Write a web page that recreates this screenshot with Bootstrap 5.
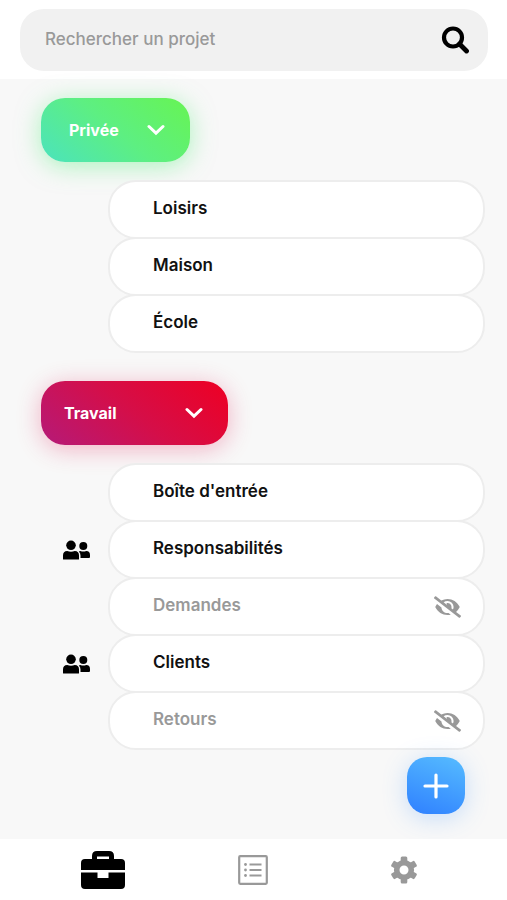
<!DOCTYPE html>
<html lang="fr">
<head>
<meta charset="utf-8">
<meta name="viewport" content="width=device-width, initial-scale=1">
<title>Projets</title>
<link href="https://cdn.jsdelivr.net/npm/bootstrap@5.3.0/dist/css/bootstrap.min.css" rel="stylesheet">
<style>
body { font-family: Inter, "Open Sans", sans-serif; font-size: 17px; line-height: 24px; background: #f8f8f8; color: #111; }
svg { display: block; flex: none; }
.top-bar { padding: 9px 19px 8px 20px; }
.search-box { background: #f1f1f1; border-radius: 24px; height: 62px; padding: 0 19px 0 25px; }
.search-box input { min-width: 0; font-weight: 500; color: #555; line-height: 24px; padding: 0 0 3px; }
.search-box input::placeholder { color: #999; opacity: 1; }
.projects { padding: 19px 22px 24px 41px; }
.group-btn { height: 64px; border-radius: 24px; color: #fff; font-weight: 700; font-size: 16px; }
.group-private { width: 149px; padding: 0 25px 0 28px; background: linear-gradient(40deg, #4be3bd, #5def82 50%, #67f453); box-shadow: 0 4px 24px rgba(93, 239, 130, .5); }
.group-work { width: 187px; padding: 0 25px 0 23px; background: linear-gradient(40deg, #b51a78, #d50e48 50%, #ee0023); box-shadow: 0 4px 24px rgba(225, 15, 75, .3); }
.project-list { margin: 18px 0 28px; }
.project-list li + li { margin-top: -2px; }
.share-col { width: 67px; padding-right: 18px; }
.project { height: 59px; border: 2px solid #ededed; border-radius: 28px; background: #fff; color: #111; font-weight: 600; padding: 0 22px 3px 43px; }
.project svg { margin-top: 3px; }
.project.is-hidden { color: #999; }
.add-btn { width: 58px; height: 57px; border-radius: 20px; background: linear-gradient(200deg, #56bcff, #2f80ff); box-shadow: 0 4px 24px rgba(70, 150, 255, .28); margin-right: 20px; }
.work-list { margin-bottom: 7px; }
.bottom-nav { height: 61px; padding: 0 28px; }
</style>
</head>
<body>
<svg width="0" height="0" class="d-none" aria-hidden="true">
  <symbol id="people" viewBox="0 0 27 20">
    <circle cx="8" cy="5.3" r="4.8"/>
    <path d="M0 19v-3.500Q0 11 4.200 11q3.800 1.600 7.600 0Q16 11 16 15.500V19q0 .5-.5.5H.5Q0 19.500 0 19z"/>
    <circle cx="20.300" cy="6" r="4"/>
    <path d="M15.800 11.500q.7-.6 1.600-.6 2.900 1.200 5.800 0Q27 11 27 15v2q0 1-1 1h-8.500v-2.500q0-2.500-1.700-4z"/>
  </symbol>
  <symbol id="eye-off" viewBox="0 0 640 512">
    <path d="M320 400c-75.850 0-137.250-58.710-142.900-133.110L72.200 185.820c-13.790 17.300-26.480 35.590-36.720 55.590a32.350 32.350 0 0 0 0 29.190C89.710 376.410 197.070 448 320 448c26.910 0 52.870-4 77.890-10.460L346 397.390a144.130 144.130 0 0 1-26 2.610zm313.820 58.100l-110.550-85.440a331.250 331.250 0 0 0 81.250-102.070 32.350 32.350 0 0 0 0-29.190C550.290 135.590 442.930 64 320 64a308.150 308.150 0 0 0-147.320 37.700L45.460 3.370A16 16 0 0 0 23 6.180L3.370 31.450A16 16 0 0 0 6.180 53.900l588.360 454.730a16 16 0 0 0 22.460-2.810l19.640-25.270a16 16 0 0 0-2.820-22.450zm-183.720-142l-39.300-30.380A94.750 94.750 0 0 0 416 256a94.760 94.760 0 0 0-121.310-92.210A47.650 47.650 0 0 1 304 192a46.640 46.640 0 0 1-1.540 10l-73.610-56.890A142.310 142.310 0 0 1 320 112a143.920 143.920 0 0 1 144 144c0 21.630-5.290 41.790-13.900 60.110z"/>
  </symbol>
  <symbol id="chevron" viewBox="0 0 18 12">
    <path d="M2 2.500l7 6.700 7-6.700" fill="none" stroke="currentColor" stroke-width="3" stroke-linecap="round"/>
  </symbol>
</svg>

<div class="d-flex flex-column min-vh-100">
  <header class="top-bar bg-white">
    <form class="search-box d-flex align-items-center" role="search">
      <input class="flex-grow-1 border-0 bg-transparent" type="search" placeholder="Rechercher un projet" aria-label="Rechercher un projet">
      <button class="btn border-0 p-0" type="button" aria-label="Rechercher">
        <svg width="28" height="28" viewBox="0 0 28 28" fill="none" stroke="#000"><circle cx="12" cy="11.500" r="9" stroke-width="4.200"/><path d="M18.500 18l7 7" stroke-width="4.800" stroke-linecap="round"/></svg>
      </button>
    </form>
  </header>

  <main class="projects flex-grow-1">
    <button class="group-btn group-private btn border-0 d-flex align-items-center justify-content-between" type="button" aria-expanded="true">Privée<svg width="18" height="12"><use href="#chevron"/></svg></button>
    <ul class="project-list list-unstyled">
      <li class="d-flex align-items-center"><span class="share-col"></span><a class="project flex-grow-1 d-flex align-items-center text-decoration-none" href="#">Loisirs</a></li>
      <li class="d-flex align-items-center"><span class="share-col"></span><a class="project flex-grow-1 d-flex align-items-center text-decoration-none" href="#">Maison</a></li>
      <li class="d-flex align-items-center"><span class="share-col"></span><a class="project flex-grow-1 d-flex align-items-center text-decoration-none" href="#">École</a></li>
    </ul>

    <button class="group-btn group-work btn border-0 d-flex align-items-center justify-content-between" type="button" aria-expanded="true">Travail<svg width="18" height="12"><use href="#chevron"/></svg></button>
    <ul class="project-list work-list list-unstyled">
      <li class="d-flex align-items-center"><span class="share-col"></span><a class="project flex-grow-1 d-flex align-items-center text-decoration-none" href="#">Boîte d'entrée</a></li>
      <li class="d-flex align-items-center"><span class="share-col d-flex justify-content-end"><svg width="27" height="20"><use href="#people"/></svg></span><a class="project flex-grow-1 d-flex align-items-center text-decoration-none" href="#">Responsabilités</a></li>
      <li class="d-flex align-items-center"><span class="share-col"></span><a class="project is-hidden flex-grow-1 d-flex align-items-center justify-content-between text-decoration-none" href="#">Demandes<svg width="27" height="22" fill="currentColor"><use href="#eye-off"/></svg></a></li>
      <li class="d-flex align-items-center"><span class="share-col d-flex justify-content-end"><svg width="27" height="20"><use href="#people"/></svg></span><a class="project flex-grow-1 d-flex align-items-center text-decoration-none" href="#">Clients</a></li>
      <li class="d-flex align-items-center"><span class="share-col"></span><a class="project is-hidden flex-grow-1 d-flex align-items-center justify-content-between text-decoration-none" href="#">Retours<svg width="27" height="22" fill="currentColor"><use href="#eye-off"/></svg></a></li>
    </ul>
    <div class="d-flex justify-content-end">
      <button class="add-btn btn border-0 p-0 d-flex align-items-center justify-content-center" type="button" aria-label="Ajouter un projet">
        <svg width="26" height="26" viewBox="0 0 26 26" stroke="#fff" stroke-width="3.200" stroke-linecap="round"><path d="M13 2v22M2 13h22"/></svg>
      </button>
    </div>
  </main>

  <nav class="bottom-nav bg-white d-flex align-items-center" aria-label="Navigation principale">
    <a class="flex-fill d-flex justify-content-center w-100" href="#" aria-label="Projets" aria-current="page">
      <svg width="44" height="38" viewBox="0 0 44 38"><path fill-rule="evenodd" d="M11 8V5q0-5 5-5h12q5 0 5 5v3h7q4 0 4 4v7H0v-7q0-4 4-4zM16 5.500V8h12V5.500z"/><path d="M0 21.500h16.500V27h11v-5.500H44V34q0 4-4 4H4q-4 0-4-4z"/></svg>
    </a>
    <a class="flex-fill d-flex justify-content-center w-100" href="#" aria-label="Listes">
      <svg width="30" height="30" viewBox="0 0 30 30" fill="#999" stroke="#999"><rect x="1.200" y="1.200" width="27.600" height="27.600" rx="1" fill="none" stroke-width="2.200"/><path d="M11.500 9.500h12M11.500 15h12M11.500 20.500h12" stroke-width="2"/><g stroke="none"><circle cx="7.500" cy="9.500" r="1.400"/><circle cx="7.500" cy="15" r="1.400"/><circle cx="7.500" cy="20.500" r="1.400"/></g></svg>
    </a>
    <a class="flex-fill d-flex justify-content-center w-100" href="#" aria-label="Paramètres">
      <svg width="26" height="28" viewBox="-13 -14 26 28" fill="#999" stroke="#999"><circle r="7.300" fill="none" stroke-width="5.600"/><g stroke="none"><rect id="tooth" x="-3.300" y="-13.500" width="6.600" height="6" rx="1.500"/><use href="#tooth" transform="rotate(60)"/><use href="#tooth" transform="rotate(120)"/><use href="#tooth" transform="rotate(180)"/><use href="#tooth" transform="rotate(240)"/><use href="#tooth" transform="rotate(300)"/></g></svg>
    </a>
  </nav>
</div>
<script src="https://cdn.jsdelivr.net/npm/bootstrap@5.3.0/dist/js/bootstrap.bundle.min.js"></script>
</body>
</html>
